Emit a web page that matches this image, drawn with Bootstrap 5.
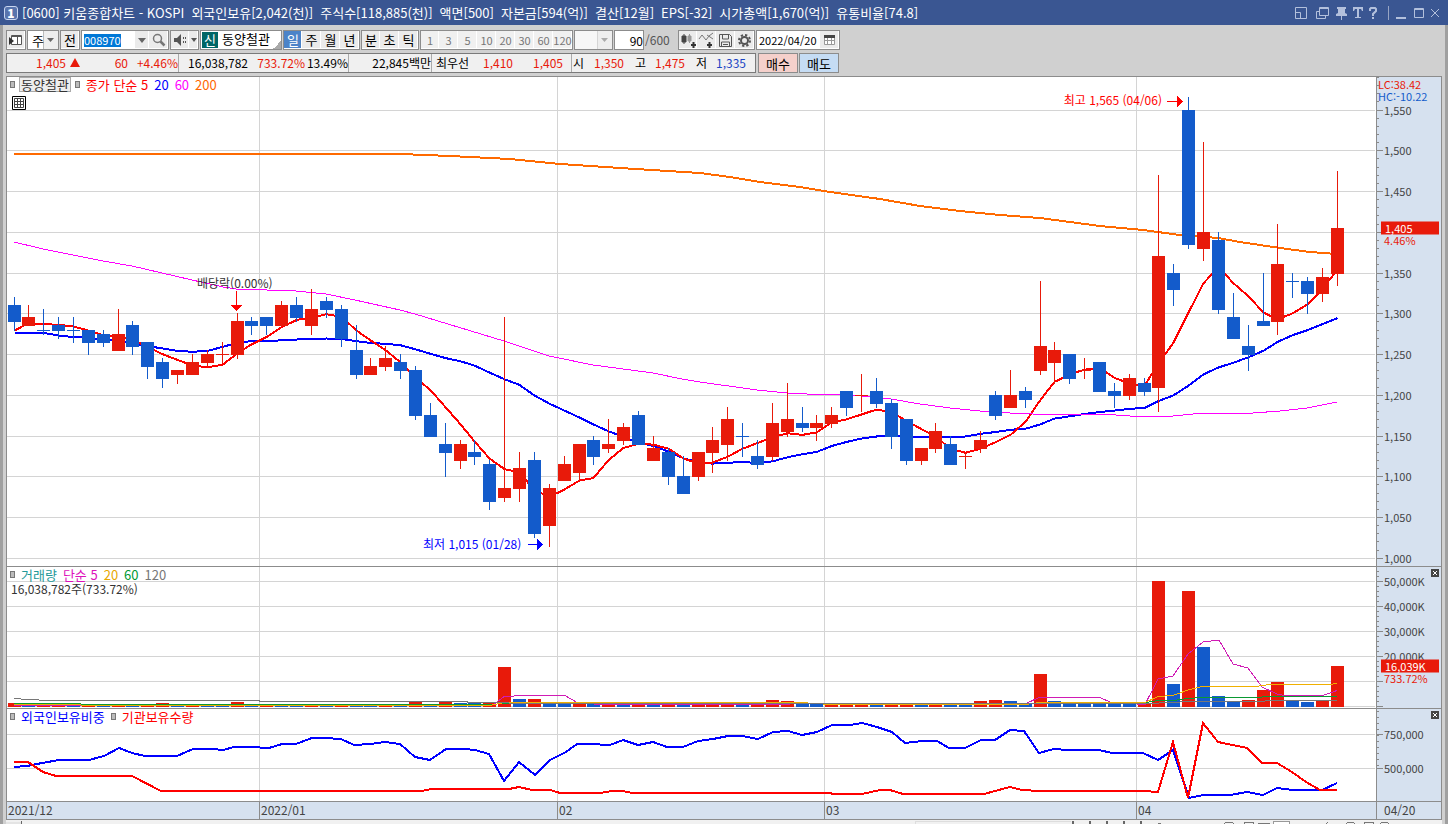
<!DOCTYPE html>
<html lang="ko">
<head>
<meta charset="utf-8">
<meta name="viewport" content="width=device-width, initial-scale=1">
<title>키움종합차트</title>
<link href="https://cdn.jsdelivr.net/npm/bootstrap@5.3.0/dist/css/bootstrap.min.css" rel="stylesheet">
<style>
:root{--line:#8c8c8c;--axis:#d6e1ef;--up:#e81a0a;--down:#135bcb}
body{font:12px/16px "Noto Sans CJK KR",sans-serif;color:#000;background:#d0d0d0;height:100vh;overflow:hidden}
button,input,select{font:inherit;color:inherit}
.win-title{height:25px;background:#3a5692;color:#fff;padding:0 7px 0 4px;white-space:nowrap}
.win-text{font-size:13px;gap:7px}
.win-num{width:14px;height:14px;border:1px solid #c9d6f0;border-radius:3px;line-height:12px;font-weight:900;text-align:center;background:#5874ad}
.win-title button{border:0;background:none;padding:0;color:#b3c0dc;display:block;line-height:0}
.win-body{border-left:3px solid #a0a0a0;border-right:3px solid #a0a0a0;padding:5px 3px 0;min-height:0}
.bar1{height:20px;gap:1px}
.box{height:20px;border:1px solid var(--line);background:#f0f0f0;display:flex;align-items:stretch;flex:none}
.box>*+*{border-left:1px solid var(--line)}
.tb{border:0;padding:0;background:#ebebeb;width:19px;line-height:16px;text-align:center;display:flex;align-items:center;justify-content:center;box-shadow:inset -1px -1px #fff;font-size:13px}
.tb:first-child{width:18px}
.tb.active{background:#4c83c8;color:#fff}
.tb.dis{color:#777;background:#f0f0f0;font-size:11px}
.tb.slim{width:14px}
.tb.slimmer{width:9px}
.box input,.box select{border:0;border-radius:0;outline:0;background:#fff;padding:0;height:18px;appearance:none;min-width:0}
.box .pick{width:30px;padding-left:4px;font-size:13px;line-height:17px;background:#fff url("data:image/svg+xml,%3Csvg xmlns='http://www.w3.org/2000/svg' width='15' height='18'%3E%3Cpath d='M0 0h15v18H0z' fill='%23eee'/%3E%3Cpath d='M0 0v18' stroke='%23888'/%3E%3Cpath d='M4 7h7l-3.500 4z' fill='%23666'/%3E%3C/svg%3E") no-repeat right}
.box .pick.off{width:37px;opacity:.5}
.box .code-in{color:#fff;background:linear-gradient(#0078d7,#0078d7) 2px 3px/37px 13px no-repeat #fff;width:53px;padding-left:2px;font-size:11px}
.box .date-in{width:63px;padding-left:2px;font-size:11px}
.stock{width:82px;background:linear-gradient(135deg,transparent 50%,#aaa 50%) right bottom/8px 8px no-repeat #fff;font-size:13px}
.stock .tag{background:#066;color:#fff;width:16px;margin:1px;text-align:center}
.stock .who{border:0;padding-left:3px}
.quote{height:20px;border:1px solid #7a7a7a;background:#f0f0f0;width:750px;line-height:18px}
.quote span{text-align:right;white-space:nowrap}
.sep{border-right:1px solid #aaa}
.c-up{color:var(--up)}.c-dn{color:#1b45c4}
.trade{border:1px solid var(--line);height:20px;width:40px;padding:0;line-height:17px;font-size:13px}
.chart{border:1px solid var(--line);border-bottom:0;background:#fff;margin-top:3px;min-height:0}
.pane{border-bottom:1px solid var(--line);min-height:0;display:grid;grid-template-columns:minmax(0,1fr) 65px;grid-template-rows:minmax(0,1fr)}
.plot{position:relative;min-width:0}
.plot svg,.scale svg.ticks{width:100%;height:100%;display:block;position:absolute;inset:0}
.plot svg.gridmark{width:14px;height:14px;left:5px;top:19px}
.scale{position:relative;background:var(--axis);border-left:1px solid var(--line);color:#444;font-size:11px;line-height:12px}
.scale b,.note{position:absolute;font-weight:400;white-space:nowrap}
.scale b{left:7px;transform:translateY(-50%)}
.scale b.edge{left:1px}
.scale .now{left:4px;right:2px;background:var(--up);color:#fff;padding-left:4px;height:13px;line-height:13px}
.legend{position:absolute;z-index:1;left:3px;top:0;gap:6px;line-height:15px;font-size:13px;align-items:center}
.dot{width:5px;height:7px;border:1px solid #777;background:#bbb}
.nm{border:1px solid #aaa;background:#eee;padding:0 1px;line-height:13px;color:#333;margin-left:-2px;margin-right:-2px}
.shut{position:absolute;right:2px;top:2px;width:8px;height:8px;border:0;padding:0;background:#444;color:#fff;display:flex}
.months{height:18px;flex:none;background:var(--axis);border-bottom:1px solid var(--line);display:grid;grid-template-columns:minmax(0,1fr) 65px;color:#444;line-height:15px}
.months>div+div{border-left:1px solid var(--line);padding-left:7px}
.foot{height:4px;flex:none;background:#f1f1f1;overflow:hidden}
.foot svg{display:block}
</style>
</head>
<body class="d-flex flex-column">
<header class="win-title d-flex align-items-center">
  <span class="win-num me-1">1</span>
  <div class="win-text flex-grow-1 d-flex"><span>[0600] 키움종합차트 - KOSPI</span><span>외국인보유[2,042(천)]</span><span>주식수[118,885(천)]</span><span>액면[500]</span><span>자본금[594(억)]</span><span>결산[12월]</span><span>EPS[-32]</span><span>시가총액[1,670(억)]</span><span>유통비율[74.8]</span></div>
  <div class="d-flex align-items-center">
    <button aria-label="크기"><svg width="21" height="16" fill="none" stroke="currentColor"><path d="M1.500 2.500h11v11h-11zM1.500 7.500h5v6"/></svg></button>
    <button aria-label="복제"><svg width="19" height="16" fill="none" stroke="currentColor"><path d="M4.500 2.500h9v8h-9zM4 3.500h9M4 6.500H1.500v7h9v-3"/></svg></button>
    <button aria-label="고정"><svg width="17" height="16" fill="currentColor"><path d="M3 2h9v2h-1v4l2 1v2H8v4H7v-4H2V9l2-1V4H3z"/></svg></button>
    <button aria-label="글꼴"><svg width="17" height="16" fill="currentColor"><path d="M2 2h10v4h-1l-1-2H8v8h2v1H4v-1h2V4H4L3 6H2z"/></svg></button>
    <button aria-label="도움말"><svg width="17" height="16" fill="none" stroke="currentColor" stroke-width="2"><path d="M2 6V4l1-1h4l1 1v2L5 9v2M5 12v2"/></svg></button>
    <svg width="9" height="16"><path d="M3.500 1v14" stroke="#98a5c4"/></svg>
    <button aria-label="최소화"><svg width="18" height="16"><path d="M2 12h10v2H2z" fill="currentColor"/></svg></button>
    <button aria-label="최대화"><svg width="18" height="16" fill="none" stroke="currentColor"><path d="M2.500 3.500h9v9h-9zM2 4.500h10"/></svg></button>
    <button aria-label="닫기"><svg width="11" height="16" fill="none" stroke="currentColor"><path d="M1 4l8 8M9 4l-8 8"/></svg></button>
  </div>
</header>

<main class="win-body flex-grow-1 d-flex flex-column">
  <div class="bar1 d-flex">
    <div class="box"><button class="tb" aria-label="목록"><svg width="18" height="18"><path d="M4.500 4.500h10v9h-10zM5 5.500h9M10.500 5v9" stroke="#555" fill="#fff"/><path d="M2 6l5 4-5 4z" fill="#333"/></svg></button></div>
    <div class="box"><select class="pick" aria-label="종류"><option>주</option></select></div>
    <div class="box"><button class="tb">전</button></div>
    <div class="box"><input class="code-in" value="008970" aria-label="종목코드"><button class="tb slim" aria-label="코드 목록"><svg width="9" height="5"><path d="M0 0h8L4 5z" fill="#666"/></svg></button><button class="tb" aria-label="검색"><svg width="14" height="14" fill="none" stroke="#777"><circle cx="5.500" cy="5.500" r="4" stroke-width="1.500"/><path d="M8.500 8.500l4 4" stroke-width="2.500"/></svg></button></div>
    <div class="box"><button class="tb" aria-label="음성"><svg width="14" height="14"><path d="M1 5h3l4-4v12L4 9H1z" fill="#555"/><path d="M10.500 4v6M12.500 4v6" stroke="#555" stroke-dasharray="2 2"/></svg></button><button class="tb slimmer" aria-label="음성 목록"><svg width="6" height="4"><path d="M0 0h6L3 4z" fill="#555"/></svg></button></div>
    <div class="box stock"><span class="tag">신</span><span class="who">동양철관</span></div>
    <div class="box"><button class="tb active">일</button><button class="tb">주</button><button class="tb">월</button><button class="tb">년</button></div>
    <div class="box"><button class="tb">분</button><button class="tb">초</button><button class="tb">틱</button></div>
    <div class="box"><button class="tb dis">1</button><button class="tb dis">3</button><button class="tb dis">5</button><button class="tb dis">10</button><button class="tb dis">20</button><button class="tb dis">30</button><button class="tb dis">60</button><button class="tb dis">120</button></div>
    <div class="box"><select class="pick off" aria-label="분 선택"><option></option></select></div>
    <div class="box"><input class="text-end" style="width:28px" value="90" aria-label="조회 개수"></div>
    <span style="width:32px;line-height:20px;color:#555">/600</span>
    <div class="box">
      <button class="tb" aria-label="봉 추가"><svg width="17" height="17"><path d="M2 4h4v6H2zM4 2v10" fill="#444" stroke="#444"/><path d="M8 4h3v5H8zM9.500 2v9" fill="#999" stroke="#999"/><path d="M11 13h5M13.500 10v6" stroke="#333" stroke-width="2"/></svg></button>
      <button class="tb" aria-label="지표 추가"><svg width="17" height="17" fill="none"><path d="M1 7l3-4 4 5 3-4 4-3M9 3l6 4" stroke="#777"/><path d="M9 13h5M11.500 10v6" stroke="#333" stroke-width="2"/></svg></button>
      <button class="tb" aria-label="저장"><svg width="17" height="17" fill="none" stroke="#555"><path d="M2.500 2.500h10l2 2v10h-12zM5.500 3v4h6V3M4.500 15v-5h8v5M6 12.500h5"/></svg></button>
      <button class="tb" aria-label="설정"><svg width="17" height="17" fill="none" stroke="#555"><circle cx="8.500" cy="8.500" r="5.500" stroke-width="2" stroke-dasharray="2.300 2"/><circle cx="8.500" cy="8.500" r="3.500" stroke-width="2"/></svg></button>
    </div>
    <div class="box"><input class="date-in" value="2022/04/20" aria-label="날짜"><button class="tb" aria-label="달력"><svg width="13" height="12"><path d="M1.500 1.500h10v9h-10zM1 3h11M1 6.500h11M4.500 3v8M8.500 3v8" fill="#fff" stroke="#999"/><path d="M1 1h11v3H1z" fill="#444"/></svg></button></div>
  </div>

  <div class="d-flex" style="gap:2px;margin-top:3px">
    <div class="quote d-flex">
      <span class="c-up" style="width:59px">1,405</span><svg class="ms-1" width="10" height="18"><path d="M5 4l5 9H0z" fill="#e81a0a"/></svg>
      <span class="c-up" style="width:48px">60</span><span class="c-up sep" style="width:51px">+4.46%</span>
      <span style="width:69px">16,038,782</span><span class="c-up" style="width:57px">733.72%</span><span class="sep" style="width:44px">13.49%</span>
      <span class="sep" style="width:83px">22,845백만</span><span style="width:37px">최우선</span>
      <span class="c-up" style="width:44px">1,410</span><span class="c-up sep" style="width:59px;padding-right:8px">1,405</span>
      <span style="width:12px">시</span><span class="c-up" style="width:40px">1,350</span><span style="width:22px">고</span><span class="c-up" style="width:39px">1,475</span><span style="width:22px">저</span><span class="c-dn" style="width:39px">1,335</span>
    </div>
    <button class="trade" style="background:#f5d0cb">매수</button><button class="trade" style="background:#c5dcf4;margin-left:-1px">매도</button>
  </div>

  <section class="chart flex-grow-1 d-flex flex-column">
    <div class="pane" style="flex:489 1 0">
      <div class="plot">
        <div class="legend d-flex"><i class="dot"></i><span class="nm">동양철관</span><i class="dot"></i><span style="color:#f00">종가 단순 5</span><span style="color:#00f">20</span><span style="color:#f0f">60</span><span style="color:#f60">200</span></div>
        <svg class="gridmark z-1" fill="none" stroke="#444"><path d="M.5.5h13v13H.5z" fill="#fff" stroke="#000"/><path d="M2.500 2.500h9v9h-9zM2 5.500h10M2 8.500h10M5.500 2v10M8.500 2v10"/></svg>
        <svg id="price" viewBox="7 77 1369 489" preserveAspectRatio="none" shape-rendering="crispEdges"></svg>
        <span class="note" style="right:214px;top:15px;color:#f00">최고 1,565 (04/06)</span>
        <span class="note" style="left:416px;bottom:14px;color:#00f">최저 1,015 (01/28)</span>
        <span class="note" style="left:190px;top:198px;color:#333">배당락(0.00%)</span>
      </div>
      <div class="scale" id="s1"><b class="edge c-up" style="top:7px">LC:38.42</b><b class="edge" style="top:19px;color:#135bcb">HC:-10.22</b></div>
    </div>
    <div class="pane" style="flex:141 1 0">
      <div class="plot">
        <div class="legend d-flex"><i class="dot"></i><span style="color:#299">거래량</span><span style="color:#d1b">단순 5</span><span style="color:#e8a800">20</span><span style="color:#093">60</span><span style="color:#777">120</span></div>
        <span class="note" style="left:4px;top:14px;color:#333">16,038,782주(733.72%)</span>
        <svg id="volume" viewBox="7 567 1369 141" preserveAspectRatio="none" shape-rendering="crispEdges"></svg>
      </div>
      <div class="scale" id="s2"><button class="shut" aria-label="닫기"><svg viewBox="0 0 8 8"><path d="M2 2l4 4M6 2L2 6" stroke="#fff"/></svg></button></div>
    </div>
    <div class="pane" style="flex:92 1 0">
      <div class="plot">
        <div class="legend d-flex"><i class="dot"></i><span style="color:#00f">외국인보유비중</span><i class="dot"></i><span style="color:#f00">기관보유수량</span></div>
        <svg id="hold" viewBox="7 709 1369 92" preserveAspectRatio="none" shape-rendering="crispEdges"></svg>
      </div>
      <div class="scale" id="s3"><button class="shut" aria-label="닫기"><svg viewBox="0 0 8 8"><path d="M2 2l4 4M6 2L2 6" stroke="#fff"/></svg></button></div>
    </div>
    <div class="months"><div class="position-relative" id="mon"></div><div>04/20</div></div>
  </section>
  <div class="foot d-flex justify-content-between">
    <svg width="20" height="4"><path d="M0 2h15v2H0z" fill="#e4e4e4"/><path d="M15.500 1v3" stroke="#666"/></svg>
    <svg width="530" height="4" fill="none" shape-rendering="crispEdges"><path d="M3.500 4V1.500h155" stroke="#ddd"/><path d="M160.500 1v3M177.500 1v3M194.500 1v3M211.500 1v3M228.500 1v3" stroke="#666" stroke-width="2"/><path d="M246 3h3M312 4l2-2h6l2 2M332 4V2h9v2M346 3h12M414 4l2-2M434 4l2-2h5l2 2M452 4V2h9v2M468 4l2-2h5l2 2" stroke="#777"/><path d="M361 1h16v3h-16z" fill="#fff" stroke="#999"/></svg>
  </div>
</main>

<script src="https://cdn.jsdelivr.net/npm/bootstrap@5.3.0/dist/js/bootstrap.bundle.min.js"></script>
<script>
// high, body top, body bottom, low; r = rising, b = falling
const bars = `1320 1310 1290 1280 b|1310 1295 1285 1285 r|1305 1280 1280 1275 b|1295 1285 1280 1270 b|1295 1280 1280 1265 b
1280 1280 1265 1250 b|1280 1275 1265 1260 b|1305 1275 1255 1255 r|1290 1285 1260 1250 b|1265 1265 1235 1220 b
1245 1240 1220 1210 b|1230 1230 1225 1215 r|1250 1240 1225 1225 r|1255 1250 1240 1235 r|1265 1250 1250 1240 r
1300 1290 1250 1245 r|1295 1290 1285 1275 b|1295 1295 1285 1275 b|1315 1310 1285 1285 r|1320 1310 1295 1290 b
1330 1305 1285 1275 r|1320 1315 1305 1295 b|1310 1305 1270 1260 b|1285 1255 1225 1220 b|1245 1235 1225 1225 r
1260 1245 1235 1230 r|1250 1240 1230 1220 b|1235 1230 1175 1170 b|1190 1175 1150 1150 b|1165 1140 1130 1100 b
1145 1140 1120 1110 r|1145 1130 1125 1115 b|1120 1115 1070 1060 b|1295 1085 1075 1070 r|1130 1110 1085 1070 r
1130 1120 1030 1025 b|1090 1085 1040 1015 r|1125 1115 1095 1095 r|1140 1140 1105 1095 r|1150 1145 1125 1115 b
1170 1140 1135 1130 r|1165 1160 1145 1140 r|1180 1175 1140 1140 b|1150 1135 1120 1120 r|1135 1130 1100 1090 b
1125 1100 1080 1080 b|1130 1130 1100 1095 r|1160 1145 1130 1105 r|1185 1170 1140 1120 r|1165 1150 1150 1125 b
1145 1125 1115 1110 b|1190 1165 1125 1120 r|1215 1170 1155 1150 r|1185 1165 1160 1155 b|1175 1165 1160 1145 r
1185 1175 1165 1160 r|1205 1205 1185 1175 b|1225 1200 1200 1180 r|1220 1205 1190 1185 b|1195 1190 1150 1135 b
1170 1170 1120 1115 b|1135 1135 1120 1115 r|1165 1155 1135 1130 r|1150 1140 1115 1115 b|1130 1125 1125 1110 r
1155 1145 1135 1130 r|1205 1200 1175 1170 b|1230 1200 1185 1185 r|1210 1205 1195 1185 b|1340 1260 1230 1225 r
1265 1255 1240 1215 r|1250 1250 1220 1215 b|1245 1230 1230 1220 r|1240 1240 1205 1205 b|1215 1205 1200 1185 b
1225 1220 1200 1195 r|1220 1215 1205 1200 b|1470 1370 1210 1180 r|1360 1350 1330 1310 b|1565 1550 1385 1380 b
1510 1400 1380 1365 r|1400 1390 1305 1300 b|1325 1295 1270 1270 b|1285 1260 1250 1230 b|1350 1290 1285 1285 b
1410 1360 1290 1275 r|1350 1340 1340 1320 b|1345 1340 1325 1300 b|1355 1345 1325 1315 r|1475 1405 1350 1335 r`
  .split(/[|\n]/).map(s => { const v = s.split(' '); return {h:+v[0], t:+v[1], b:+v[2], l:+v[3], up:v[4] === 'r'}; });
// volume in millions of shares; negative = lower than the day before
const vols = [1.2,-.8,.8,.9,-.8,.9,-.8,.9,-.8,.8,1,-.8,.8,-.8,-.7,1.5,-.9,.9,-.8,-.8,.8,-.7,.8,-.7,-.7,.8,-.7,1.5,-.9,2,-1.2,-1,1.7,15.5,-2.600,2.600,
 -1.2,-1,1.2,-.9,1,-.8,.9,-.8,.9,-.8,.9,.9,1,-.9,1.1,2.300,2,-1.3,-1.1,1.2,1.2,1.2,-1,1,1.1,-.9,1,-.9,-.8,1.8,2.300,-1.8,-1.2,12.6,-2,-1.1,-1.1,-1.1,-1,-1,1.2,50,-8.600,45.7,-23.7,-4,-2.100,2.500,6.500,9.7,-2.500,-1.7,2.200,16];

const X = i => Math.floor(14 + i * 14.870);
const P = p => Math.floor(110 + (1550 - p) * .815);
const V = v => 706 - v * 2.507;
const line = (pts, c, w) => `<polyline points="${pts}" fill="none" stroke="${c}" stroke-width="${w}" vector-effect="non-scaling-stroke"/>`;
const rect = (x, y, w, h, c) => `<rect x="${x}" y="${y}" width="${w}" height="${h}" fill="${c}"/>`;
const UP = '#e81a0a', DN = '#135bcb', G = '#d4d4d4';
const months = [[7, '2021/12'], [259, '2022/01'], [557, '02'], [824, '03'], [1136, '04']];
const vgrid = (y, h) => months.slice(1).map(m => rect(m[0], y, 1, h, G)).join('');
const close = bars.map(b => b.up ? b.t : b.b);
const sma = (n, head) => close.map((c, i) => {
  const v = i < head.length ? head[i] : close.slice(i - n + 1, i + 1).reduce((a, b) => a + b) / n;
  return (X(i) + .5) + ',' + (110.5 + (1550 - v) * .815);
}).join(' ');

let s = vgrid(77, 489);
for (let p = 1000; p <= 1550; p += 50) s += rect(7, P(p), 1368, 1, G);
s += line('14,154 400,154 450,156 510,159 560,164 620,168 700,173 730,177 760,182 800,187 830,192 880,199 920,206 960,211 1000,215 1040,218 1100,226 1143,230 1180,235 1218,238 1240,242 1280,248 1310,252 1337,254', '#ff6a00', 2);
s += line(sma(20, [1277,1277,1277,1274,1272,1271,1269,1268,1264,1261,1258,1255,1254,1255,1260,1265,1267,1267,1268]), '#00f', 2);
s += line(sma(5, [1280,1289,1288,1287]), '#f00', 2);
s += line('14,242 43,249 73,255 103,261 132,266 162,273 192,280 223,287 236,289 267,290 296,291 326,294 355,300 400,310 415,314 504,341 549,356 593,365 623,369 653,373 682,379 700,382 757,390 787,393 807,394 823,394 861,396 891,399 920,404 950,408 980,411 1010,413 1033,414 1103,414 1143,417 1173,416 1203,413 1253,413 1280,411 1307,408 1337,402', '#f0f', 1);
bars.forEach((b, i) => {
  const c = b.up ? UP : DN;
  s += rect(X(i), P(b.h), 1, P(b.l) - P(b.h) + 1, c) + rect(X(i) - 6, P(b.t), 13, P(b.b) - P(b.t) + 1, c);
});
s += '<path d="M1167 101h10v-5l6 5.500-6 5.500v-5h-10z" fill="#f00"/><path d="M528 544h9v-5l6 5.500-6 5.500v-5h-9z" fill="#00f"/><path d="M236 291h1v14h5l-5.500 6-5.500-6h5z" fill="#f00"/>';
price.innerHTML = s;

s = vgrid(567, 141);
for (let v = 0; v <= 50; v += 10) s += rect(7, Math.round(V(v)), 1368, 1, G);
vols.forEach((v, i) => { const y = Math.round(V(Math.abs(v))); s += rect(X(i) - 6, y, 13, 707 - y, v > 0 ? UP : DN); });
s += line('14,705.5 490,705.5 495,703.5 504,696.5 525,695.5 565,695.5 577,702.5 600,704.5 780,704.5 800,703.5 1026,703.5 1039,697.5 1100,697.5 1111,702.5 1145,704.5 1158,679 1173,676 1188,654 1203,642 1219,640 1233,664 1248,668 1262,687 1277,694 1285,695.5 1323,695.5 1337,690.5', '#d01bb5', 1);
s += line('14,703.5 80,703.5 82,704.5 490,704.5 504,703.5 1140,703.5 1158,700.5 1173,700.5 1188,698.5 1202,697.5 1255,697.5 1270,696.5 1337,696.5', '#0a9a32', 1);
s += line('14,704.5 80,704.5 82,705.5 490,705.5 504,702.5 800,702.5 830,704.5 1026,704.5 1039,702.5 1145,702.5 1158,696.5 1173,695.5 1188,690 1202,686.5 1255,686.5 1270,684.5 1330,684.5 1337,683.5', '#f0b000', 1);
s += line('14,698.5 27,699.5 50,700.5 259,700.5 260,701.5 467,701.5 468,702.5 550,703.5 1145,703.5 1173,702.5 1188,701.5 1260,701.5 1270,700.5 1337,700.5', '#777', 1);
volume.innerHTML = s;

s = vgrid(709, 92) + rect(7, 734, 1368, 1, G) + rect(7, 768, 1368, 1, G);
s += line('14,767 27,766 42,763 59,760 89,760 104,756 119,748 132,753 145,756 177,756 193,749 212,749 223,750 234,747 250,747 269,748 282,744 296,744 312,738 325,738 341,739 354,745 370,744 385,742 400,744 415,757 430,760 446,749 464,749 475,750 489,754 504,781 519,762 535,775 550,760 566,752 577,744 590,744 610,745 623,740 638,745 653,742 667,747 683,747 698,741 713,739 728,736 742,736 758,739 773,732 788,731 802,735 817,732 832,725 850,725 862,723 877,727 892,732 905,743 922,741 937,741 949,748 965,748 981,740 995,740 1010,730 1024,731 1039,753 1054,749 1067,750 1099,750 1112,753 1143,753 1158,760 1173,750 1189,798 1203,795 1230,795 1247,792 1263,795 1277,788 1293,790 1322,790 1337,783', '#00f', 2);
s += line('14,762 28,762 43,772 56,776 132,776 161,791 421,791 432,789 509,789 519,787 532,790 550,790 560,793 600,793 612,791 623,791 632,793 830,793 833,794 862,794 880,790 890,790 903,794 984,794 995,791 1010,787 1022,790 1039,791 1143,791 1158,792 1173,742 1188,798 1203,723 1218,742 1247,748 1262,763 1277,763 1292,772 1306,782 1320,790 1337,790', '#f00', 2);
hold.innerHTML = s;

// value scales
function scale(id, top, h, major, minor, extra = '') {
  const el = document.getElementById(id);
  let t = '';
  major.forEach(([y]) => t += rect(0, y, 6, 1, '#888'));
  minor.forEach(y => t += rect(0, y, 2, 1, '#888'));
  const pct = y => (y - top) / h * 100 + '%';
  el.insertAdjacentHTML('beforeend', `<svg class="ticks" viewBox="0 ${top} 64 ${h}" preserveAspectRatio="none" shape-rendering="crispEdges">${t}</svg>` +
    major.map(([y, x]) => x ? `<b style="top:${pct(y)}">${x}</b>` : '').join('') + extra.replace(/@(\d+)/g, (m, y) => pct(+y)));
}
const range = (a, b, st) => { const r = []; for (let v = a; v <= b; v += st) r.push(v); return r; };
scale('s1', 77, 489, range(1000, 1550, 50).map(p => [P(p), p === 1400 ? '' : p.toLocaleString('en-US')]), range(1000, 1590, 10).map(P),
  '<b class="now" style="top:@228">1,405</b><b class="c-up" style="top:@240">4.46%</b>');
scale('s2', 567, 141, range(0, 50, 10).map(v => [Math.round(V(v)), v > 10 ? v + ',000K' : '']), range(0, 54, 2).map(v => Math.round(V(v))),
  '<b class="now" style="top:@666">16,039K</b><b class="c-up" style="top:@678">733.72%</b>');
scale('s3', 709, 92, [[734, '750,000'], [768, '500,000']], range(711, 768, 6));
mon.innerHTML = months.map(([x, t], i) => `<span class="position-absolute h-100" style="left:${(x - 7) / 13.69}%;border-left:${i ? 1 : 0}px solid #8c8c8c;padding-left:1px">${t}</span>`).join('');
</script>
</body>
</html>
